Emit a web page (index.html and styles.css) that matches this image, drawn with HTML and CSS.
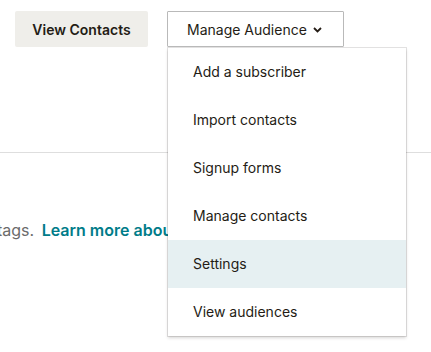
FILE: index.html
```html
<!DOCTYPE html>
<html lang="en">
<head>
  <meta charset="UTF-8">
  <title>Audience</title>
  <link rel="stylesheet" href="styles.css">
</head>
<body>
  <div class="toolbar">
    <button class="btn btn-secondary">View Contacts</button>
    <div class="dropdown">
      <button class="btn btn-outline">
        Manage Audience
        <svg class="chevron" width="9" height="6" viewBox="0 0 9 6"><path d="M1 1l3.5 3.5L8 1" fill="none" stroke="#241c15" stroke-width="1.8"/></svg>
      </button>
      <!-- open menu -->
      <ul class="menu">
        <li>Add a subscriber</li>
        <li>Import contacts</li>
        <li>Signup forms</li>
        <li>Manage contacts</li>
        <li class="active">Settings</li>
        <li>View audiences</li>
      </ul>
    </div>
  </div>

  <hr class="divider">

  <p class="note">tags. <a href="#">Learn more about tags</a></p>
</body>
</html>
```

FILE: styles.css
```css
html, body {
  height: 100%;
}
body {
  margin: 0;
  min-height: 352px;
  font-family: Inter, "Liberation Sans", sans-serif;
  font-size: 14px;
  color: #241c15;
  background: #fff;
}
.toolbar {
  display: flex;
  gap: 19px;
  padding: 11px 0 0 15px;
}
.btn {
  font-family: inherit;
  font-size: 14px;
  height: 36px;
  color: #241c15;
  white-space: nowrap;
  cursor: pointer;
}
.btn-secondary {
  background: #efeeea;
  border: none;
  border-radius: 2px;
  font-weight: 600;
  padding: 0;
  width: 133px;
}
.btn-outline {
  background: #fff;
  border: 1px solid #b9b9b9;
  border-radius: 1px;
  padding: 0 0 0 19px;
  display: flex;
  align-items: center;
  gap: 6px;
  width: 177px;
}
.chevron {
  margin-top: 1px;
}
.dropdown {
  position: relative;
}
.menu {
  position: absolute;
  top: 37px;
  left: 1px;
  width: 238px;
  margin: 0;
  padding: 0;
  list-style: none;
  background: #fff;
  box-shadow: 0 0 0 1px rgba(36, 28, 21, 0.12), 0 2px 3px rgba(36, 28, 21, 0.18);
  z-index: 2;
}
.menu li {
  height: 48px;
  line-height: 48px;
  padding-left: 25px;
}
.menu li.active {
  background: #e6f0f2;
}
.divider {
  border: none;
  border-top: 1px solid #dedede;
  margin: 105px 0 0;
}
.note {
  margin: 67px 0 0 -3px;
  font-size: 16px;
  color: #6b6b6b;
  white-space: nowrap;
}
.note a {
  color: #007c89;
  font-weight: 600;
  text-decoration: none;
  margin-left: 3px;
}
```
